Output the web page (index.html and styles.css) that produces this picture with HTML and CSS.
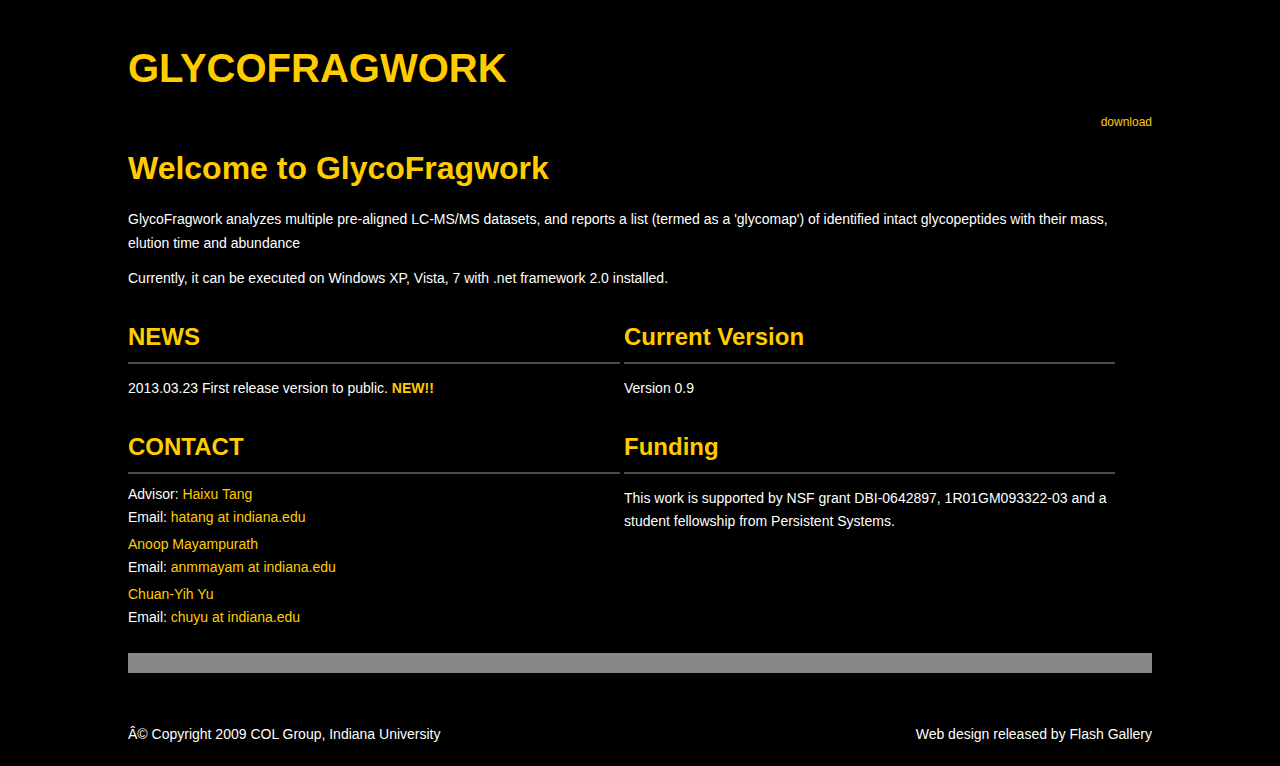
FILE: index.html
```html
<!DOCTYPE html>
<html>
<head>
<meta charset="utf-8">
<title>GlycoFragwork</title>
<link rel="stylesheet" href="styles.css">
</head>
<body>
<div class="wrap">
  <h1 class="logo">GLYCOFRAGWORK</h1>
  <div class="topnav"><a href="#">download</a></div>
  <h2 class="welcome">Welcome to GlycoFragwork</h2>
  <p class="intro">GlycoFragwork analyzes multiple pre-aligned LC-MS/MS datasets, and reports a list (termed as a 'glycomap') of identified intact glycopeptides with their mass, elution time and abundance</p>
  <p class="intro second">Currently, it can be executed on Windows XP, Vista, 7 with .net framework 2.0 installed.</p>

  <div class="cols">
    <section class="box news">
      <h3>NEWS</h3>
      <p class="item">2013.03.23 First release version to public. <b class="hl">NEW!!</b></p>
    </section>
    <section class="box">
      <h3>Current Version</h3>
      <p class="item">Version 0.9</p>
    </section>
    <section class="box contact">
      <h3>CONTACT</h3>
      <p class="person">Advisor: <a href="#">Haixu Tang</a><br>Email: <a href="#">hatang at indiana.edu</a></p>
      <p class="person"><a href="#">Anoop Mayampurath</a><br>Email: <a href="#">anmmayam at indiana.edu</a></p>
      <p class="person"><a href="#">Chuan-Yih Yu</a><br>Email: <a href="#">chuyu at indiana.edu</a></p>
    </section>
    <section class="box contact">
      <h3>Funding</h3>
      <p class="fund">This work is supported by NSF grant DBI-0642897, 1R01GM093322-03 and a student fellowship from Persistent Systems.</p>
    </section>
  </div>

  <div class="bar"></div>

  <footer class="foot">
    <span>Â© Copyright 2009 COL Group, Indiana University</span>
    <span>Web design released by Flash Gallery</span>
  </footer>
</div>
</body>
</html>
```

FILE: styles.css
```css
html, body {
  margin: 0;
  padding: 0;
  background: #000;
}
body {
  font-family: "Liberation Sans", Arial, Helvetica, sans-serif;
  color: #fff;
  font-size: 14px;
}
a {
  color: #ffcc00;
  text-decoration: none;
}
.wrap {
  width: 1024px;
  margin: 0 auto;
  padding-top: 45px;
}
.logo {
  margin: 0;
  font-size: 40px;
  line-height: 46px;
  font-weight: bold;
  color: #ffcc00;
}
.topnav {
  margin-top: 24px;
  text-align: right;
  font-size: 12px;
  line-height: 14px;
}
.welcome {
  margin: 20px 0 0;
  font-size: 32px;
  line-height: 38px;
  color: #ffcc00;
  font-weight: bold;
}
.intro {
  margin: 20px 0 0;
  line-height: 24px;
  width: 1000px;
}
.intro.second {
  margin-top: 11px;
}
.cols {
  display: grid;
  grid-template-columns: 492px 491px;
  column-gap: 4px;
  margin-top: 33px;
}
.box h3 {
  margin: 0;
  font-size: 24px;
  line-height: 28px;
  color: #ffcc00;
  font-weight: bold;
  padding-bottom: 11px;
  border-bottom: 2px solid #4d4d4d;
}
.item {
  margin: 12px 0 0;
  line-height: 24px;
}
.hl {
  color: #ffcc00;
}
.contact {
  margin-top: 33px;
}
.person {
  margin: 9px 0 0;
  line-height: 23px;
}
.person + .person {
  margin-top: 4px;
}
.fund {
  margin: 13px 0 0;
  line-height: 23px;
}
.bar {
  height: 20px;
  background: #888;
  margin-top: 24px;
}
.foot {
  display: flex;
  justify-content: space-between;
  margin-top: 53px;
  line-height: 16px;
  font-size: 14px;
}
```
